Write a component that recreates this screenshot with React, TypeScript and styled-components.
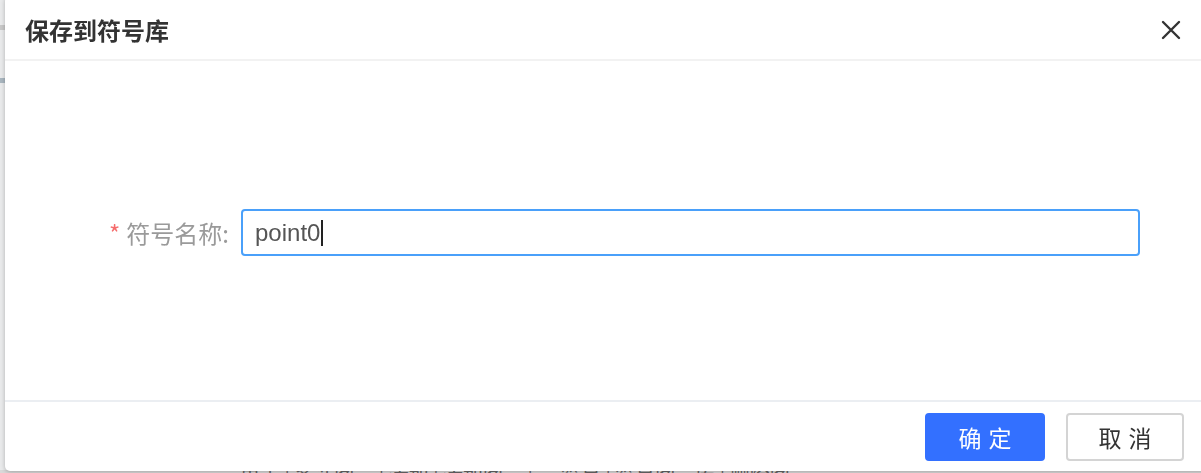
import React from "react";
import styled, { createGlobalStyle } from "styled-components";

const GlobalStyle = createGlobalStyle`
    html, body {
        margin: 0;
        padding: 0;
        width: 100%;
        height: 100%;
        overflow: hidden;
        background: #e9eaeb;
        font-family: "Liberation Sans", "Noto Sans CJK SC", sans-serif;
    }
`;

const Page = styled.div`
    width: 1201px;
    height: 473px;
    display: flex;
    flex-direction: column;
    justify-content: space-between;
    overflow: hidden;
`;

// what peeks out from under the dialog
const SideMarks = styled.div`
    display: flex;
    flex-direction: column;
    padding-top: 25px;
    gap: 48px;
`;

const SideMark = styled.div<{ $tone: string }>`
    width: 6px;
    height: 5px;
    background: ${(p) => p.$tone};
`;

const StatusBar = styled.div`
    display: flex;
    align-items: flex-start;
    gap: 28px;
    height: 3px;
    padding-left: 240px;
    overflow: hidden;
    background: #d9d9d9;
`;

const StatusText = styled.span`
    margin-top: -4px;
    font-family: "Noto Sans CJK SC", sans-serif;
    font-size: 20px;
    line-height: 20px;
    color: #666;
    white-space: nowrap;
`;

// dialog lies over the page
const Dialog = styled.div`
    position: fixed;
    z-index: 10;
    left: 5px;
    top: -4px;
    width: 1210px;
    height: 475px;
    display: flex;
    flex-direction: column;
    background: #fff;
    border-radius: 5px;
    box-shadow: 0 1px 4px rgba(0, 0, 0, 0.25);
`;

const Header = styled.div`
    display: flex;
    align-items: center;
    justify-content: space-between;
    height: 65px;
    padding: 4px 34px 0 20px;
    box-sizing: border-box;
    border-bottom: 2px solid #f2f2f2;
`;

const Title = styled.h2`
    margin: 0;
    font-family: "Noto Sans CJK SC", sans-serif;
    font-size: 24px;
    font-weight: 700;
    color: #333;
`;

const CloseButton = styled.button`
    display: flex;
    padding: 0;
    border: 0;
    background: none;
    cursor: pointer;
`;

const Body = styled.div`
    flex: 1;
    display: flex;
    align-items: center;
    padding: 4px 75px 0 20px;
`;

const FormRow = styled.div`
    flex: 1;
    display: flex;
    align-items: center;
`;

const Label = styled.label`
    width: 216px;
    padding-right: 12px;
    box-sizing: border-box;
    text-align: right;
    font-family: "Noto Sans CJK SC", sans-serif;
    font-size: 24px;
    color: #9a9a9a;
    white-space: nowrap;
`;

const Required = styled.span`
    color: #f56c6c;
    margin-right: 6px;
`;

const InputBox = styled.div`
    flex: 1;
    display: flex;
    align-items: center;
    height: 47px;
    padding: 0 12px;
    box-sizing: border-box;
    border: 2px solid #4aa0fa;
    border-radius: 4px;
    font-size: 24px;
    color: #555;
`;

const Caret = styled.span`
    width: 1.5px;
    height: 26px;
    margin-left: 1px;
    background: #222;
`;

const Footer = styled.div`
    display: flex;
    justify-content: flex-end;
    gap: 21px;
    padding: 11px 31px 10px 0;
    border-top: 2px solid #ebeef2;
`;

const Button = styled.button<{ $primary?: boolean }>`
    width: ${(p) => (p.$primary ? 120 : 118)}px;
    height: 48px;
    box-sizing: border-box;
    border-radius: 4px;
    border: 2px solid ${(p) => (p.$primary ? "#3370ff" : "#d4d4d4")};
    background: ${(p) => (p.$primary ? "#3370ff" : "#fff")};
    color: ${(p) => (p.$primary ? "#fff" : "#333")};
    font-family: "Noto Sans CJK SC", sans-serif;
    font-size: 23px;
    letter-spacing: 7px;
    text-indent: 7px;
    cursor: pointer;
`;

const CloseIcon = () => (
    <svg width="20" height="20" viewBox="0 0 20 20">
        <path d="M2 2L18 18M18 2L2 18" stroke="#333" strokeWidth="2.4" strokeLinecap="round" />
    </svg>
);

const App = () => {
    return (
        <>
            <GlobalStyle />
            <Page>
                <SideMarks>
                    <SideMark $tone="#c8c8c8" />
                    <SideMark $tone="#a9b6bf" />
                </SideMarks>
                <StatusBar>
                    <StatusText>单击 | 多选图元 | 添加 | 添加图元 |</StatusText>
                    <StatusText>符号 | 符号图元库 | 删除图元</StatusText>
                </StatusBar>
            </Page>
            <Dialog>
                <Header>
                    <Title>保存到符号库</Title>
                    <CloseButton aria-label="关闭">
                        <CloseIcon />
                    </CloseButton>
                </Header>
                <Body>
                    <FormRow>
                        <Label>
                            <Required>*</Required>符号名称:
                        </Label>
                        <InputBox>
                            point0<Caret />
                        </InputBox>
                    </FormRow>
                </Body>
                <Footer>
                    <Button $primary>确定</Button>
                    <Button>取消</Button>
                </Footer>
            </Dialog>
        </>
    );
};

export default App;
